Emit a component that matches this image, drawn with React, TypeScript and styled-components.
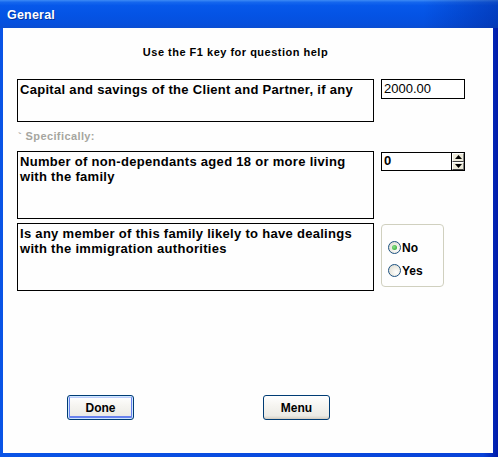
import React from "react";
import styled, { createGlobalStyle } from "styled-components";

const GlobalStyle = createGlobalStyle`
  html, body { margin: 0; padding: 0; background: #ffffff; }
  * { box-sizing: border-box; }
`;

const SANS = `"Liberation Sans", Arial, sans-serif`;

const Window = styled.div`
  width: 498px;
  height: 457px;
  display: flex;
  flex-direction: column;
  background: linear-gradient(to right, #0a54e6 0%, #0842d8 97%, #001aa8 100%);
  font-family: ${SANS};
`;

const TitleBar = styled.div`
  height: 28px;
  flex: none;
  display: flex;
  align-items: center;
  padding: 2px 0 0 7px;
  background:
    linear-gradient(to right, rgba(0, 0, 0, 0) 85%, rgba(0, 20, 120, 0.35) 100%),
    linear-gradient(to bottom, #3d8bf5 0%, #1567ee 8%, #0658ea 20%, #0453e4 55%, #0650dd 85%, #0a4ed2 100%);
  color: #ffffff;
  font-size: 12.5px;
  font-weight: bold;
  letter-spacing: 0.2px;
  text-shadow: 1px 1px 0 rgba(0, 20, 90, 0.5);
`;

const Client = styled.div`
  flex: 1;
  margin: 0 5px 4px 3px;
  background: #fefefe;
  display: flex;
  flex-direction: column;
  padding: 0 28px 0 14px;
`;

const Help = styled.div`
  margin: 18px 11px 0 0;
  height: 13px;
  line-height: 13px;
  text-align: center;
  font-size: 11px;
  font-weight: bold;
  letter-spacing: 0.5px;
  color: #000;
`;

const Row = styled.div<{ $top: number }>`
  display: grid;
  grid-template-columns: 357px 84px;
  column-gap: 7px;
  align-items: start;
  margin-top: ${(p) => p.$top}px;
`;

const Question = styled.div<{ $h: number }>`
  height: ${(p) => p.$h}px;
  border: 1px solid #000;
  padding: 2px 2px 0 2px;
  font-size: 13px;
  line-height: 15px;
  font-weight: bold;
  letter-spacing: 0.3px;
  color: #000;
  background: #fefefe;
`;

const TextInput = styled.div`
  height: 20px;
  border: 1px solid #000;
  background: #fff;
  padding: 1px 0 0 2px;
  font-size: 13px;
  line-height: 16px;
  color: #000;
`;

const SpinBox = styled.div`
  height: 19px;
  margin-top: 1px;
  border: 1px solid #000;
  background: #fff;
  display: flex;
`;

const SpinValue = styled.div`
  flex: 1;
  padding: 0 0 0 2px;
  font-size: 13px;
  font-weight: bold;
  line-height: 16px;
`;

const SpinButtons = styled.div`
  width: 13px;
  display: flex;
  flex-direction: column;
  border-left: 1px solid #000;
`;

const SpinButton = styled.div`
  flex: 1;
  display: flex;
  align-items: center;
  justify-content: center;
  background: #ece9d8;
  border-top: 1px solid #fff;
  border-left: 1px solid #fff;
  border-right: 1px solid #808080;
  border-bottom: 1px solid #404040;
`;

const Label = styled.div`
  margin: 8px 0 0 1px;
  height: 13px;
  line-height: 13px;
  font-size: 11px;
  font-weight: bold;
  letter-spacing: 0.4px;
  color: #a6a6a0;
`;

const RadioGroup = styled.div`
  width: 63px;
  height: 63px;
  margin-top: 1px;
  border: 1px solid #d0d0bf;
  border-radius: 4px;
  padding: 16px 0 0 6px;
  display: flex;
  flex-direction: column;
  gap: 10px;
`;

const RadioItem = styled.div`
  display: flex;
  align-items: center;
  gap: 1px;
  height: 13px;
  font-size: 12px;
  font-weight: bold;
  color: #000;
`;

const RadioCircle = styled.span<{ $checked: boolean }>`
  width: 13px;
  height: 13px;
  border-radius: 50%;
  border: 1px solid #1c5180;
  background: radial-gradient(circle at 65% 65%, #ffffff 0%, #f0efe8 40%, #d8d6cb 100%);
  display: flex;
  align-items: center;
  justify-content: center;
  &::after {
    content: "";
    width: 5px;
    height: 5px;
    border-radius: 50%;
    background: ${(p) => (p.$checked ? "radial-gradient(circle at 40% 40%, #8be08b, #21a121)" : "transparent")};
  }
`;

const ButtonRow = styled.div`
  display: flex;
  margin: 104px 0 0 50px;
  gap: 129px;
`;

const Button = styled.button<{ $default?: boolean }>`
  width: 67px;
  height: 25px;
  padding: 0;
  border: 1px solid #003c74;
  border-radius: 3px;
  background: linear-gradient(to bottom, #ffffff 0%, #f6f5f1 40%, #ecebe6 85%, #d6d0c5 100%);
  font-family: ${SANS};
  font-size: 12px;
  font-weight: bold;
  color: #000;
  box-shadow: ${(p) =>
    p.$default
      ? "inset 0 0 0 1px #cee7ff, inset 0 -1px 0 2px #6982ee, inset 0 1px 0 1px #bccbfa"
      : "inset 0 -1px 0 0 #d6d0c5"};
`;

const Arrow = ({ up }: { up: boolean }) => (
  <svg width="7" height="4" viewBox="0 0 7 4">
    <polygon points={up ? "3.5,0 7,4 0,4" : "0,0 7,0 3.5,4"} fill="#000" />
  </svg>
);

export default function App() {
  return (
    <>
      <GlobalStyle />
      <Window>
        <TitleBar>General</TitleBar>
        <Client>
          <Help>Use the F1 key for question help</Help>
          <Row $top={20}>
            <Question $h={43}>Capital and savings of the Client and Partner, if any</Question>
            <TextInput>2000.00</TextInput>
          </Row>
          <Label>` Specifically:</Label>
          <Row $top={8}>
            <Question $h={68}>Number of non-dependants aged 18 or more living with the family</Question>
            <SpinBox>
              <SpinValue>0</SpinValue>
              <SpinButtons>
                <SpinButton>
                  <Arrow up />
                </SpinButton>
                <SpinButton>
                  <Arrow up={false} />
                </SpinButton>
              </SpinButtons>
            </SpinBox>
          </Row>
          <Row $top={4}>
            <Question $h={68}>Is any member of this family likely to have dealings with the immigration authorities</Question>
            <RadioGroup>
              <RadioItem>
                <RadioCircle $checked />
                No
              </RadioItem>
              <RadioItem>
                <RadioCircle $checked={false} />
                Yes
              </RadioItem>
            </RadioGroup>
          </Row>
          <ButtonRow>
            <Button $default>Done</Button>
            <Button>Menu</Button>
          </ButtonRow>
        </Client>
      </Window>
    </>
  );
}
